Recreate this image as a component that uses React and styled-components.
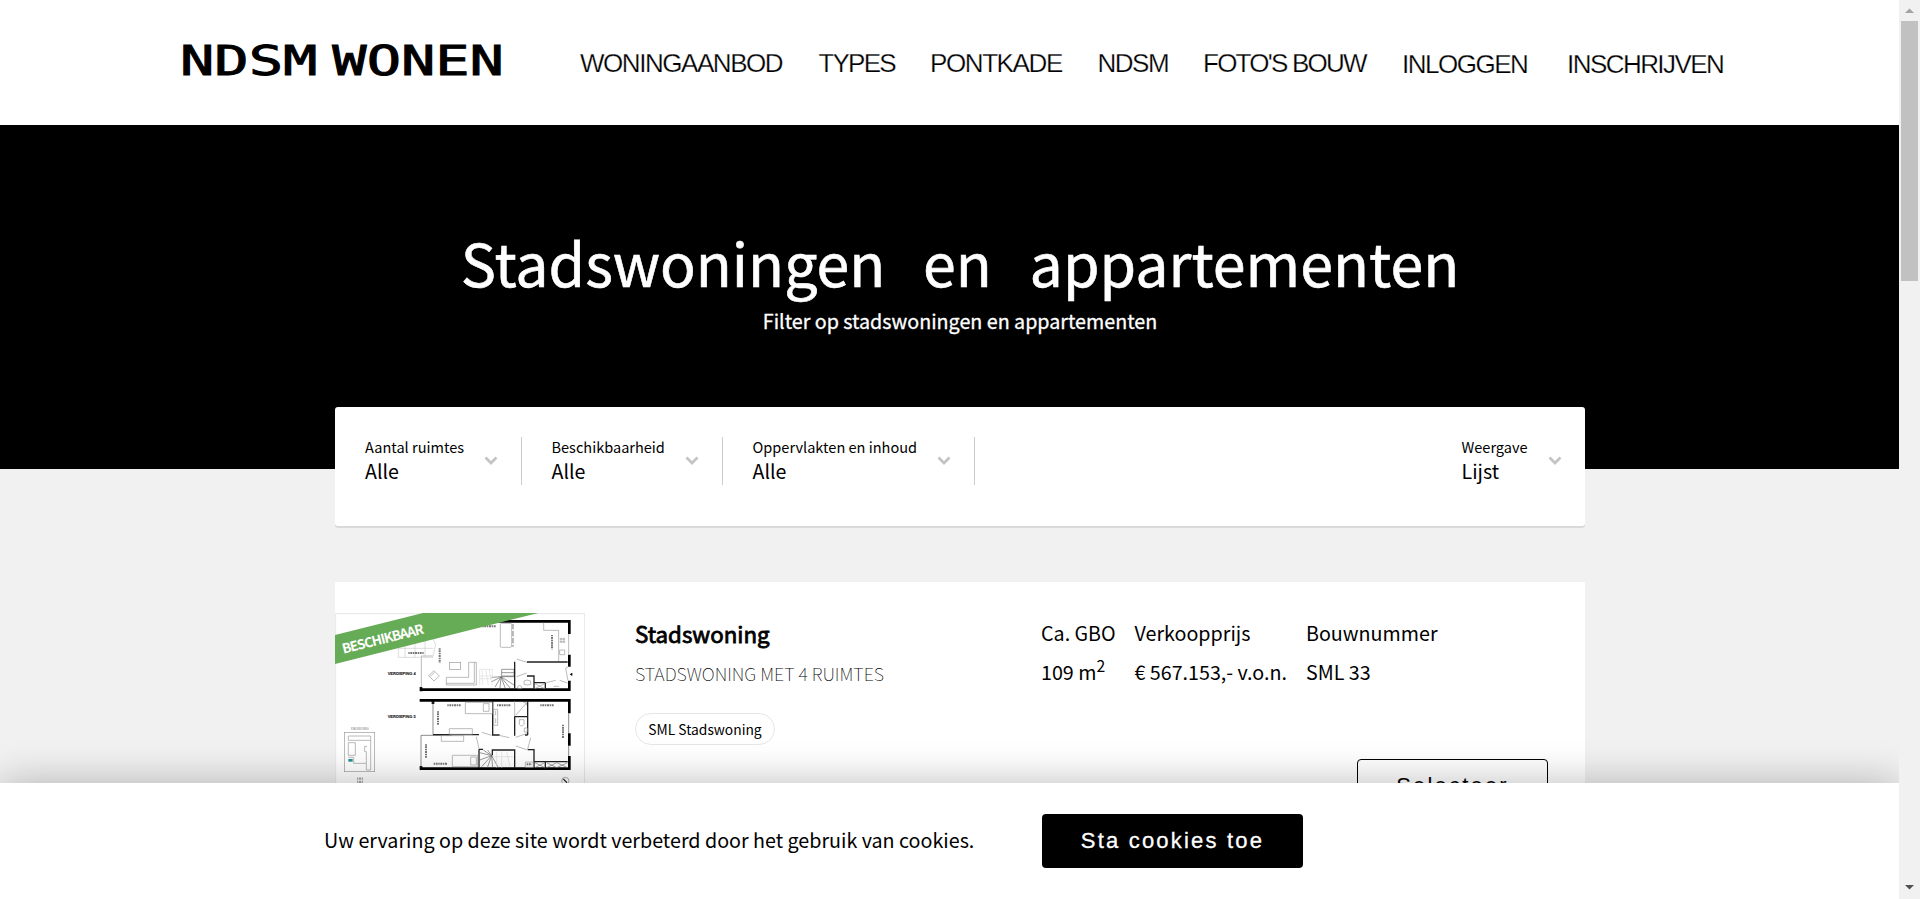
import React from "react";
import styled, { createGlobalStyle } from "styled-components";

const GlobalStyle = createGlobalStyle`
  * { box-sizing: border-box; }
  html, body { margin: 0; height: 100%; overflow: hidden; background: #f1f1f1; }
  body { font-family: "Noto Sans CJK SC", "Noto Sans", sans-serif; color: #000; }
`;

const Screen = styled.div`
  display: flex;
  width: 1920px;
  height: 899px;
  overflow: hidden;
`;

const Page = styled.div`
  position: relative;
  width: 1899px;
  height: 899px;
  overflow: hidden;
  background: #f1f1f1;
`;

const Header = styled.header`
  display: flex;
  height: 125px;
  padding-left: 180px;
  background: #fff;
`;

const LogoBox = styled.a`
  width: 400px;
  padding-top: 37px;
`;

const Wordmark = styled.span`
  display: inline-block;
  font: 400 40px/48px "DejaVu Sans Mono", monospace;
  word-spacing: -13.5px;
  white-space: nowrap;
  -webkit-text-stroke: 0.9px #000;
  transform: scaleX(1.425);
  transform-origin: left;
`;

const Nav = styled.nav`
  display: flex;
  padding-top: 48px;
`;

const NavLink = styled.a`
  width: ${(p) => p.$width}px;
  padding-top: ${(p) => (p.$low ? 1 : 0)}px;
  font: 400 26px/30px "Liberation Sans", sans-serif;
  letter-spacing: ${(p) => p.$spacing}px;
  white-space: nowrap;
  -webkit-text-stroke: 0.25px #fff;
`;

const Hero = styled.section`
  height: 344px;
  padding: 96px 0 0 21px;
  background: #000;
  color: #fff;
  text-align: center;
`;

const HeroTitle = styled.h1`
  margin: 0;
  font-size: 59.1px;
  font-weight: 400;
  line-height: 80px;
  word-spacing: 24.5px;
  white-space: nowrap;
  -webkit-text-stroke: 0.6px #fff;
`;

const HeroText = styled.p`
  margin: 5px 0 0;
  font-size: 19.7px;
  line-height: 30px;
  -webkit-text-stroke: 0.3px #fff;
`;

const FilterBar = styled.section`
  position: relative;
  display: flex;
  width: 1250px;
  height: 119px;
  margin: -62px 0 0 335px;
  padding-top: 30px;
  background: #fff;
  border-radius: 3px;
  box-shadow: 0 2px 0 #d9d9d9;
`;

const Filter = styled.div`
  display: flex;
  justify-content: space-between;
  width: ${(p) => p.$width}px;
  height: 48px;
  margin-left: ${(p) => (p.$end ? "auto" : 0)};
  padding: 0 23px 0 29.5px;
  border-right: ${(p) => (p.$end ? "none" : "1px solid #ccc")};
  white-space: nowrap;
  &:first-child { padding-left: 30px; }
`;

const FilterLabel = styled.div`
  font-size: 14.55px;
  line-height: 20px;
`;

const FilterValue = styled.div`
  font-size: 19.6px;
  line-height: 27px;
`;

const Chevron = styled.svg`
  width: 14px;
  height: 9px;
  margin-top: 19px;
  fill: none;
  stroke: #c4c4c4;
  stroke-width: 2.8;
`;

const Card = styled.article`
  display: flex;
  width: 1250px;
  height: 330px;
  margin: 56px 0 0 335px;
  background: #fff;
`;

const Media = styled.div`
  position: relative;
  width: 250px;
  height: 180px;
  margin-top: 31px;
  overflow: hidden;
`;

const RibbonText = styled.span`
  position: absolute;
  left: 7px;
  top: 25px;
  color: #fff;
  font-size: 13.4px;
  font-weight: 700;
  line-height: 20px;
  letter-spacing: -1px;
  transform: rotate(-14.2deg);
  transform-origin: left center;
`;

const Summary = styled.div`
  width: 406px;
  padding: 36px 0 0 50px;
  white-space: nowrap;
`;

const CardTitle = styled.h2`
  margin: 0;
  font-size: 22.3px;
  font-weight: 400;
  line-height: 30px;
  -webkit-text-stroke: 0.8px #000;
`;

const CardSubtitle = styled.div`
  margin-top: 12px;
  font-size: 18px;
  font-weight: 100;
  line-height: 26px;
`;

const Tag = styled.span`
  display: flex;
  align-items: center;
  justify-content: center;
  width: 140px;
  height: 32px;
  margin-top: 27px;
  border: 1px solid #e6e6e6;
  border-radius: 16px;
  font-size: 13.8px;
  line-height: 20px;
`;

const Details = styled.div`
  display: flex;
  flex-direction: column;
  width: 507px;
  padding: 36px 0 0 50px;
`;

const Specs = styled.div`
  display: grid;
  grid-template-columns: 93.5px 171.5px 140px;
  row-gap: 9px;
  font-size: 19.7px;
  line-height: 30px;
  white-space: nowrap;
  sup { font-size: 80%; line-height: 0; }
`;

const SelectButton = styled.button`
  width: 191px;
  height: 54px;
  margin: 72px 0 0 316px;
  padding: 0;
  border: 1px solid #000;
  border-radius: 4px;
  background: transparent;
  color: #000;
  font: 400 22px/30px "Liberation Sans", sans-serif;
  letter-spacing: 2.2px;
`;

const CookieBar = styled.aside`
  position: absolute;
  left: 0;
  right: 0;
  bottom: 0;
  display: flex;
  align-items: flex-start;
  height: 116px;
  padding: 31px 0 0 324px;
  background: #fff;
  box-shadow: 0 0 40px rgba(0, 0, 0, 0.27);
`;

const CookieText = styled.p`
  width: 718px;
  margin: 11px 0 0;
  font-size: 19.7px;
  line-height: 30px;
  white-space: nowrap;
`;

const CookieButton = styled.button`
  width: 261px;
  height: 54px;
  padding: 0;
  border: 0;
  border-radius: 4px;
  background: #000;
  color: #fff;
  font: 400 22px/30px "Liberation Sans", sans-serif;
  letter-spacing: 2.2px;
  -webkit-text-stroke: 0.3px #fff;
`;

const Scrollbar = styled.div`
  display: flex;
  flex-direction: column;
  align-items: center;
  justify-content: space-between;
  width: 21px;
  height: 899px;
  background: #f1f1f1;
`;

const Thumb = styled.div`
  width: 17px;
  height: 260px;
  margin-bottom: auto;
  background: #c1c1c1;
`;

const Arrow = styled.svg`
  display: block;
  width: 21px;
  height: 21px;
`;

const NAV = [
  ["WONINGAANBOD", 238.5, -1.45],
  ["TYPES", 111.5, -1.8],
  ["PONTKADE", 167.5, -1.4],
  ["NDSM", 105.5, -1.5],
  ["FOTO'S BOUW", 199, -1.75],
  ["INLOGGEN", 165, -1.5, true],
  ["INSCHRIJVEN", 170, -1.55, true],
];

const FILTERS = [
  ["Aantal ruimtes", "Alle", 187],
  ["Beschikbaarheid", "Alle", 201],
  ["Oppervlakten en inhoud", "Alle", 252],
  ["Weergave", "Lijst", 153, true],
];

function FloorPlan() {
  const wall = { fill: "none", stroke: "#000", strokeWidth: 8 };
  const inner = { fill: "none", stroke: "#222", strokeWidth: 4 };
  const thin = { fill: "none", stroke: "#999", strokeWidth: 2 };
  const dim = { fill: "none", stroke: "#777", strokeWidth: 6, strokeDasharray: "4 2 6 2" };
  return (
    <svg width="250" height="180" viewBox="30 129 750 540" style={{ display: "block" }}>
      <rect x="32" y="131" width="747" height="560" fill="#fff" stroke="#e6e6e6" strokeWidth="3" />
      <path {...wall} d="M500 154H733V192M733 254V290M733 332V359H284M288 364V351" />
      <path {...thin} d="M289 352V258H323M731 192V254M731 290L722 294M729 332L722 294" />
      <path {...thin} d="M220 205V262H323L332 225L322 200M240 200V262M270 200V262M300 200V262M220 235H325" stroke="#ccc" />
      <rect {...thin} x="526" y="160" width="34" height="72" rx="4" />
      <path {...thin} d="M564 162V230" strokeDasharray="16 5" strokeWidth="4" />
      <path {...thin} d="M656 158V181H701V275M704 240h15v14h-15zM706 205h5v4h-5zM714 205h5v4h-5zM706 213h5v4h-5zM714 213h5v4h-5z" />
      <rect {...thin} x="373" y="277" width="34" height="21" />
      <path {...thin} d="M364 322H431V277H454V345H364zM364 340H448V277" />
      <path {...thin} d="M311 317L327 302L343 318L327 333zM316 319L329 307" />
      <path {...thin} stroke="#ddd" d="M464 345V298H502V318H464M472 298V345M482 298L490 345M492 298L502 345M464 326H500" />
      <path {...thin} stroke="#666" d="M530 318V298H567V318H530M530 308H567M528 320L500 322M528 321L500 335M528 321L510 351M528 321L525 355M528 321L541 355M528 321L556 355M528 320L567 345M528 320H567" />
      <path {...inner} d="M569 355V275M606 276H728M606 318H627V357M661 338V357M627 338H661" />
      <path {...thin} d="M575 267L606 277M575 320L605 309M664 338L692 331M704 331L728 339M629 341L659 356M659 341L629 356M686 349h16M578 350q6-8 12 0v6h-12z" />
      <path {...thin} d="M597 333q8-6 20 0v10q-12 4-20 0z" />
      <path d="M734 313l8-5v10z" />
      <path {...dim} d="M250 249H296M344 235V278M472 169H512M681 195V238" />
      <path {...wall} d="M284 391H733V430M733 490V527M733 558V596H284M288 600V588M324 392V402" />
      <path {...thin} stroke="#555" d="M324 395V494M288 496V592M288 496H380M731 430V490M731 527V558" />
      <path {...inner} d="M324 494H462M503 392V495H524M608 392V495M608 495H600M569 497V440H608M462 538V594M462 538H474M502 556V540H569V595M608 539H627V595M627 575H728M661 575V596" />
      <path {...thin} d="M421 397H503V431H421zM475 401h17v23h-17zM373 476H442V493H373zM349 497H416V514H349zM382 556H458V590H382zM437 561h17v24h-17z" />
      <path {...thin} d="M470 487L500 496M522 496L553 503M572 502L604 491M572 528L605 539M454 500L462 536M617 503L608 538M569 393V440M572 436L605 398M595 398h9v8" />
      <path {...thin} d="M506 418h12v48h-12zM512 422v14M512 445v15M583 449h14v14q-7 10-14 0zM598 474h9v12h-9zM601 576h24v16h-24z" />
      <path {...thin} stroke="#666" d="M500 557L464 548M500 557L464 570M500 557L470 590M500 557L487 593M500 557L503 593M500 557L520 593M475 540L500 557M488 540L500 557" />
      <path {...thin} stroke="#ddd" d="M515 545V593M530 545V593M545 545L555 590M503 560H565" />
      <path {...inner} strokeWidth="2" stroke="#777" d="M630 578L659 593M659 578L630 593M665 593L695 578L728 593M665 578L695 593L728 578" />
      <path {...dim} d="M367 406H408M516 406H558M646 406H688M339 424V464M714 464V506M303 523V564M326 581H368M605 583H620" />
      <g fontFamily="Liberation Sans, sans-serif" fontWeight="700" fontSize="13" fill="#111" stroke="#111" strokeWidth=".3">
        <text x="188" y="315" textLength="84" lengthAdjust="spacingAndGlyphs">VERDIEPING 4</text>
        <text x="188" y="445" textLength="84" lengthAdjust="spacingAndGlyphs">VERDIEPING 5</text>
      </g>
      <text x="77" y="480" fontFamily="Liberation Sans, sans-serif" fontSize="10" fill="#777" textLength="54" lengthAdjust="spacingAndGlyphs">STADSWONING</text>
      <rect {...thin} x="58" y="487" width="91" height="118" />
      <path {...thin} d="M70 498H137V511H70zM137 511V600H124V580H86V562H70M70 518H91V556H70zM124 580V545H119V529H126" />
      <rect x="70" y="567" width="13" height="8" fill="#278d95" />
      <path {...dim} stroke="#aaa" strokeWidth="7" d="M96 626H114M96 636H114" />
      <circle cx="721" cy="633" r="11" fill="none" stroke="#888" strokeWidth="2" />
      <path d="M715 627L726 638" stroke="#333" strokeWidth="4" />
      <path d="M30 195L294 129H640L30 282z" fill="#66ab55" />
    </svg>
  );
}

export default function App() {
  return (
    <>
      <GlobalStyle />
      <Screen>
        <Page>
          <Header>
            <LogoBox><Wordmark>NDSM WONEN</Wordmark></LogoBox>
            <Nav>
              {NAV.map(([text, width, spacing, low]) => (
                <NavLink key={text} $width={width} $spacing={spacing} $low={low}>{text}</NavLink>
              ))}
            </Nav>
          </Header>
          <Hero>
            <HeroTitle>Stadswoningen en appartementen</HeroTitle>
            <HeroText>Filter op stadswoningen en appartementen</HeroText>
          </Hero>
          <FilterBar>
            {FILTERS.map(([label, value, width, end]) => (
              <Filter key={label} $width={width} $end={end}>
                <div>
                  <FilterLabel>{label}</FilterLabel>
                  <FilterValue>{value}</FilterValue>
                </div>
                <Chevron viewBox="0 0 14 9"><path d="M1.5 1.5L7 7L12.5 1.5" /></Chevron>
              </Filter>
            ))}
          </FilterBar>
          <Card>
            <Media>
              <FloorPlan />
              <RibbonText>BESCHIKBAAR</RibbonText>
            </Media>
            <Summary>
              <CardTitle>Stadswoning</CardTitle>
              <CardSubtitle>STADSWONING MET 4 RUIMTES</CardSubtitle>
              <Tag>SML Stadswoning</Tag>
            </Summary>
            <Details>
              <Specs>
                <span>Ca. GBO</span><span>Verkoopprijs</span><span>Bouwnummer</span>
                <span>109 m<sup>2</sup></span><span>€ 567.153,- v.o.n.</span><span>SML 33</span>
              </Specs>
              <SelectButton>Selecteer</SelectButton>
            </Details>
          </Card>
          <CookieBar>
            <CookieText>Uw ervaring op deze site wordt verbeterd door het gebruik van cookies.</CookieText>
            <CookieButton>Sta cookies toe</CookieButton>
          </CookieBar>
        </Page>
        <Scrollbar>
          <Arrow viewBox="0 0 21 21"><path d="M6 13L10.5 8.5L15 13z" fill="#a3a3a3" /></Arrow>
          <Thumb />
          <Arrow viewBox="0 0 21 21"><path d="M6 7L10.5 11.5L15 7z" fill="#505050" /></Arrow>
        </Scrollbar>
      </Screen>
    </>
  );
}
